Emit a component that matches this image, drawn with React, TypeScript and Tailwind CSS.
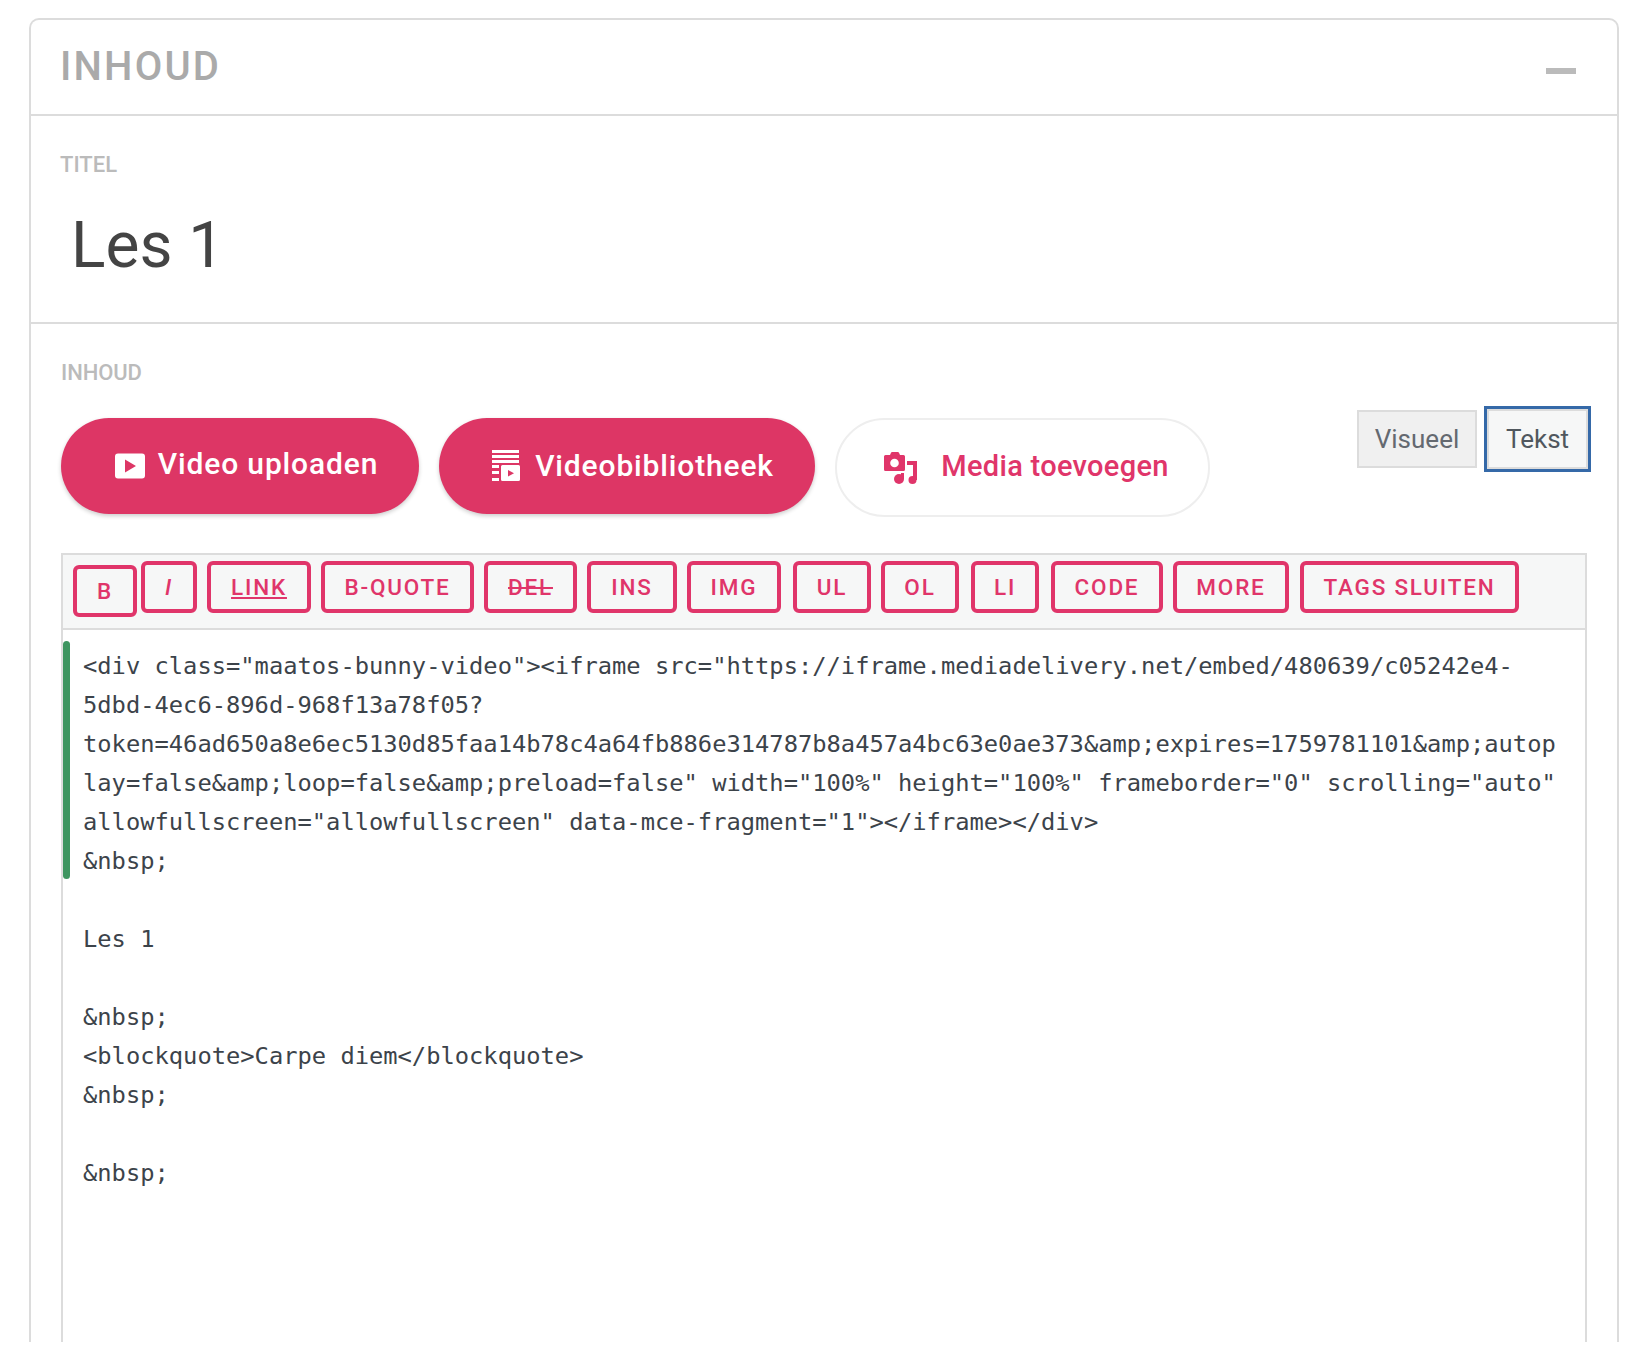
const roboto = "font-['Roboto',sans-serif]";

const tags = [
  { label: "B", w: "w-[64px]", extra: "mt-1 mr-[-6px]" },
  { label: "I", w: "w-[56px]", extra: "italic" },
  { label: "LINK", w: "w-[104px]", extra: "underline" },
  { label: "B-QUOTE", w: "w-[153px]", extra: "" },
  { label: "DEL", w: "w-[93px]", extra: "line-through" },
  { label: "INS", w: "w-[90px]", extra: "" },
  { label: "IMG", w: "w-[94px]", extra: "" },
  { label: "UL", w: "w-[78px]", extra: "ml-[2px]" },
  { label: "OL", w: "w-[78px]", extra: "" },
  { label: "LI", w: "w-[68px]", extra: "ml-[2px]" },
  { label: "CODE", w: "w-[112px]", extra: "ml-[2px]" },
  { label: "MORE", w: "w-[116px]", extra: "" },
  { label: "TAGS SLUITEN", w: "w-[219px]", extra: "ml-px" },
];

const codeLines = [
  '<div class="maatos-bunny-video"><iframe src="https://iframe.mediadelivery.net/embed/480639/c05242e4-',
  "5dbd-4ec6-896d-968f13a78f05?",
  "token=46ad650a8e6ec5130d85faa14b78c4a64fb886e314787b8a457a4bc63e0ae373&amp;expires=1759781101&amp;autop",
  'lay=false&amp;loop=false&amp;preload=false" width="100%" height="100%" frameborder="0" scrolling="auto"',
  'allowfullscreen="allowfullscreen" data-mce-fragment="1"></iframe></div>',
  "&nbsp;",
  "",
  "Les 1",
  "",
  "&nbsp;",
  "<blockquote>Carpe diem</blockquote>",
  "&nbsp;",
  "",
  "&nbsp;",
];

function PlayIcon() {
  return (
    <svg width="32" height="26" viewBox="0 0 32 26" className="shrink-0">
      <path
        fillRule="evenodd"
        fill="#fff"
        d="M4 0.500h24a3 3 0 0 1 3 3v19a3 3 0 0 1-3 3H4a3 3 0 0 1-3-3v-19a3 3 0 0 1 3-3zM11 6.500v13l11-6.500z"
      />
    </svg>
  );
}

function LibraryIcon() {
  return (
    <svg width="28" height="32" viewBox="0 0 28 32" className="shrink-0">
      <path
        fill="#fff"
        d="M0 0h27v3H0zM0 5h27v3H0zM0 10h27v3H0zM0 15h7v3H0zM0 21h7v3H0zM0 28h7v3H0z"
      />
      <path
        fillRule="evenodd"
        fill="#fff"
        d="M10.500 15h16a1.500 1.500 0 0 1 1.500 1.500v13a1.500 1.500 0 0 1-1.500 1.500h-16a1.500 1.500 0 0 1-1.500-1.500v-13a1.500 1.500 0 0 1 1.500-1.500zM16 20v6.500l6-3.250z"
      />
    </svg>
  );
}

function MediaIcon() {
  return (
    <svg width="33" height="32" viewBox="0 0 33 32" className="shrink-0">
      <path
        fill="#e0356a"
        d="M6 3l1-2.200c.2-.5.6-.8 1.200-.8h5.600c.6 0 1 .3 1.200.8L16 3h3.500A1.500 1.500 0 0 1 21 4.500v13a1.500 1.500 0 0 1-1.500 1.500h-18A1.500 1.500 0 0 1 0 17.500v-13A1.500 1.500 0 0 1 1.500 3z"
      />
      <circle cx="10.500" cy="11" r="4.300" fill="#fff" />
      <path fill="#e0356a" d="M23 9h10v19h-4V13h-6z" />
      <circle cx="28.500" cy="28" r="4" fill="#e0356a" />
      <path fill="#e0356a" d="M17 21h3v6h-3z" />
      <circle cx="15" cy="27" r="5" fill="#e0356a" />
    </svg>
  );
}

export default function App() {
  return (
    <div className={`h-[1356px] bg-white pt-[18px] pl-[29px] pr-[19px] ${roboto}`}>
      <div className="flex h-[1324px] flex-col overflow-hidden rounded-t-[10px] border-2 border-b-0 border-[#dcdcdc]">
        {/* Header */}
        <div className="flex h-[96px] shrink-0 items-center justify-between border-b-2 border-[#dcdcdc] pl-[29px] pr-[41px]">
          <h2 className="text-[40px] font-medium tracking-[2.2px] text-[#aaaaaa]">INHOUD</h2>
          <div className="mt-[8px] h-[6px] w-[30px] bg-[#bbbbbb]" />
        </div>

        {/* Title */}
        <div className="flex h-[208px] shrink-0 flex-col border-b-2 border-[#dcdcdc] pl-[29px] pt-[36px]">
          <label className="text-[22px] font-medium leading-[26px] text-[#bbbbbb]">TITEL</label>
          <div className="mt-[31px] pl-[11px] text-[64px] leading-[74px] text-[#444444]">Les 1</div>
        </div>

        {/* Content */}
        <div className="flex min-h-0 flex-1 flex-col pl-[30px] pr-[30px] pt-[36px]">
          <label className="text-[22px] font-medium leading-[26px] tracking-[-0.1px] text-[#bbbbbb]">INHOUD</label>

          <div className="relative mt-[32px] flex items-start gap-5">
            <button className="flex h-[96px] w-[358px] items-center justify-center gap-[12px] rounded-[48px] bg-[#dd3665] pl-[12px] text-[30px] font-medium tracking-[0.85px] text-white shadow-[0_2px_4px_rgba(0,0,0,0.2)]">
              <PlayIcon />
              <span className="-mt-[6px]">Video uploaden</span>
            </button>
            <button className="flex h-[96px] w-[376px] items-center justify-center gap-[15px] rounded-[48px] bg-[#dd3665] pl-[12px] text-[30px] font-medium tracking-[0.85px] text-white shadow-[0_2px_4px_rgba(0,0,0,0.2)]">
              <LibraryIcon />
              <span className="-mt-[2px]">Videobibliotheek</span>
            </button>
            <button className="flex h-[99px] w-[375px] items-center justify-center gap-[24px] rounded-[50px] border-2 border-[#eeeeee] bg-white pl-[8px] text-[29px] font-medium tracking-[0.3px] text-[#e0356a]">
              <MediaIcon />
              <span className="-mt-[2px]">Media toevoegen</span>
            </button>

            {/* Mode tabs */}
            <div className="absolute right-[-4px] top-[-12px] flex items-center gap-[7px]">
              <button className="h-[58px] w-[120px] border-2 border-[#dcdcdc] bg-[#f0f0f0] text-[26px] text-[#646970]">Visueel</button>
              <button className="h-[66px] w-[107px] border-[3px] border-[#3569a8] bg-[#f6f7f7] text-[26px] text-[#50575e] shadow-[inset_0_0_0_2px_#dcdcdc]">Tekst</button>
            </div>
          </div>

          {/* Editor */}
          <div className="mt-[36px] flex min-h-0 flex-1 flex-col border-x-2 border-t-2 border-[#dcdcdc]">
            <div className="flex h-[75px] shrink-0 items-start gap-[10px] border-b-2 border-[#dcdcdc] bg-[#f6f7f7] pl-[10px] pt-[6px]">
              {tags.map((t) => (
                <button
                  key={t.label}
                  className={`h-[52px] shrink-0 rounded-[6px] border-4 border-[#e0356a] pt-[2px] text-[22.5px] font-medium tracking-[1.8px] text-[#e0356a] ${t.w} ${t.extra}`}
                >
                  {t.label}
                </button>
              ))}
            </div>
            <div className="relative flex-1 pl-[20px] pt-[17px]">
              <div className="absolute left-0 top-[11px] h-[238px] w-[7px] rounded-full bg-[#3e9560]" />
              <pre className="font-['DejaVu_Sans_Mono',monospace] text-[23.75px] leading-[39px] text-[#3c434a]">
                {codeLines.map((line, i) => (
                  <div key={i} className="h-[39px]">{line}</div>
                ))}
              </pre>
            </div>
          </div>
        </div>
      </div>
    </div>
  );
}
